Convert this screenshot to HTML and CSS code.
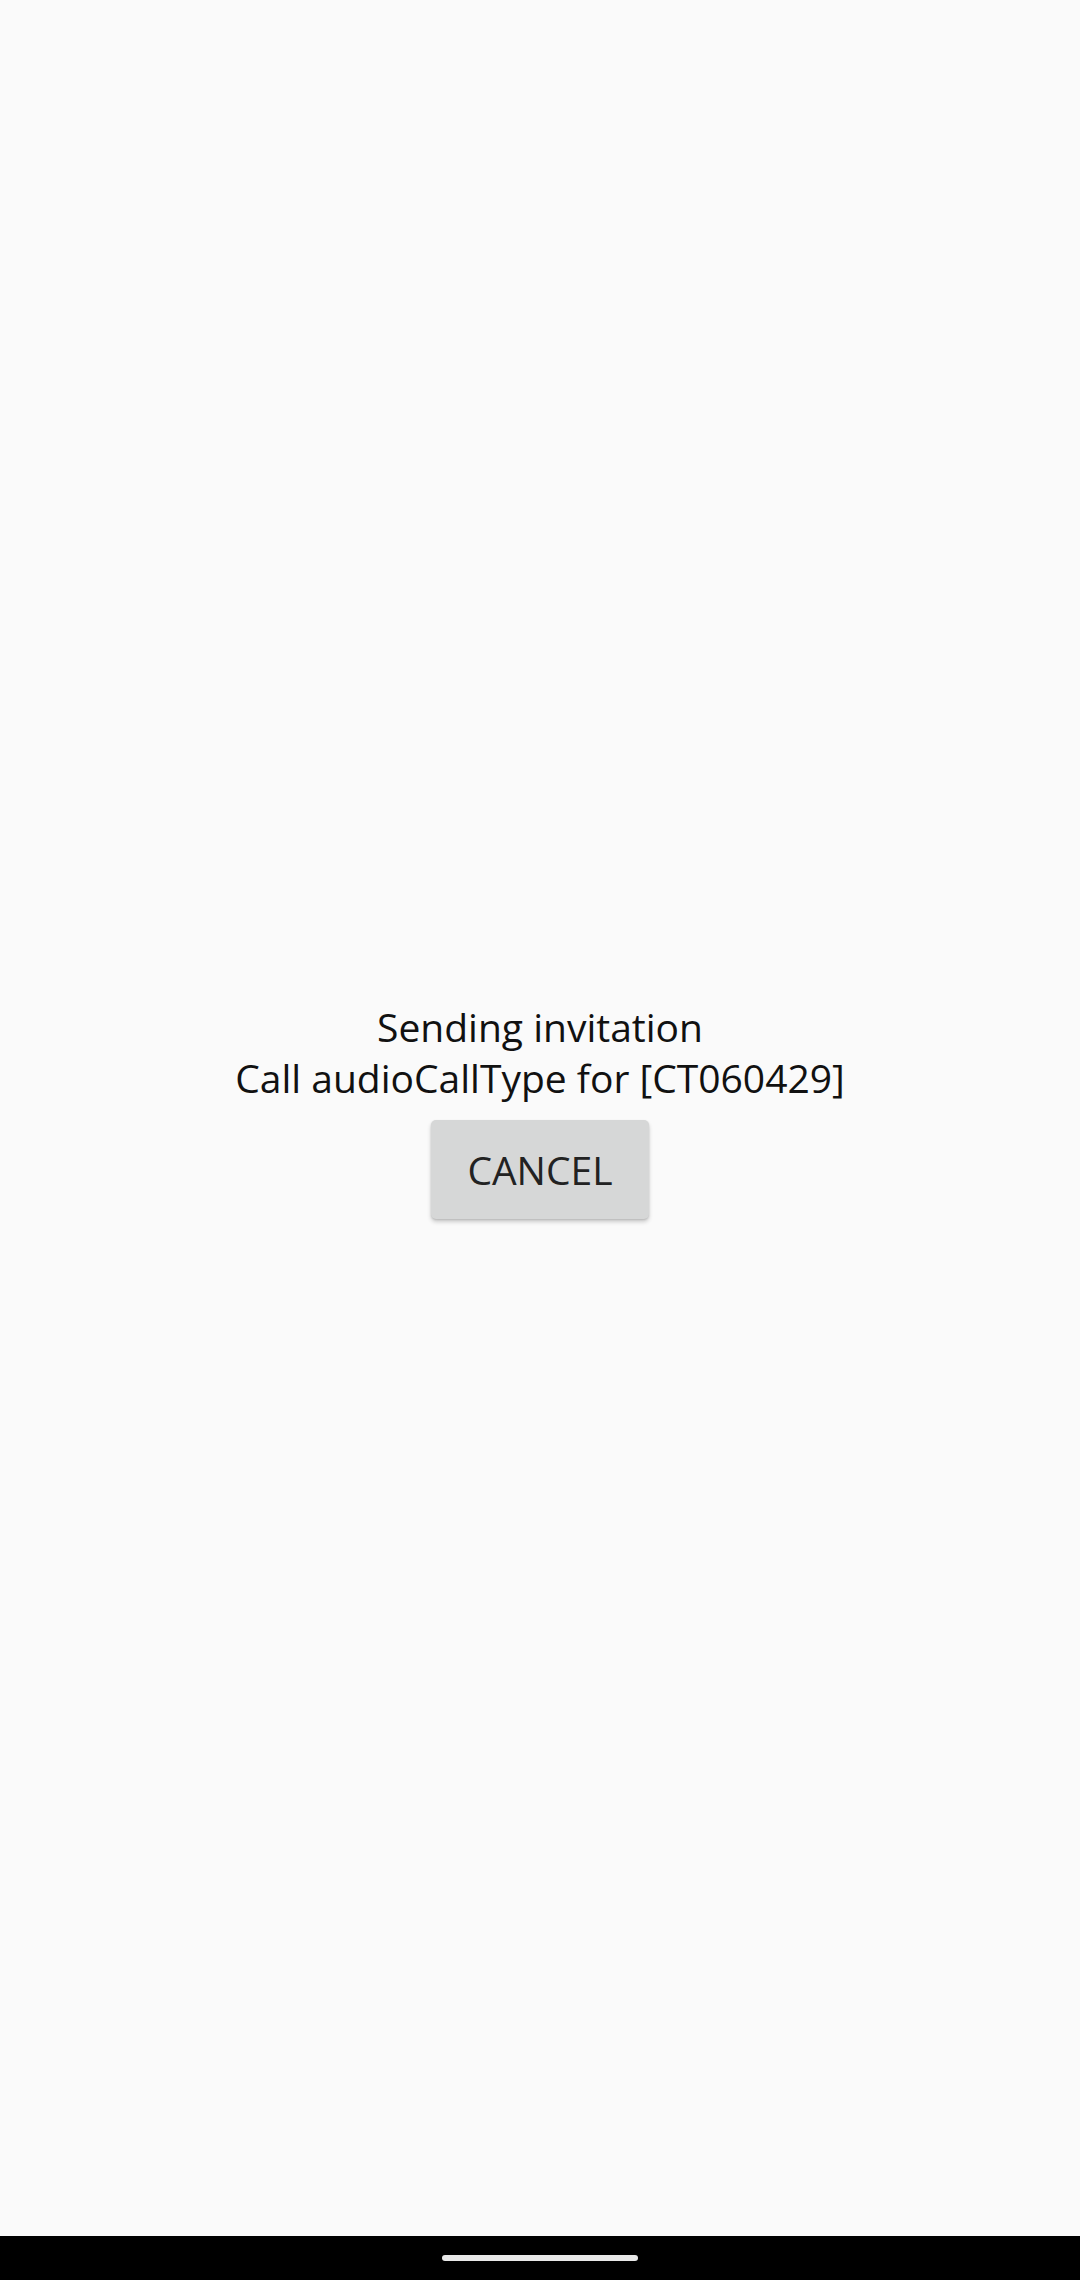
FILE: index.html
```html
<!DOCTYPE html>
<html lang="en">
<head>
<meta charset="utf-8">
<link rel="stylesheet" href="styles.css">
</head>
<body>
<main class="screen">
  <div class="content">
    <p class="message">Sending invitation<br>Call audioCallType for [CT060429]</p>
    <button class="cancel">CANCEL</button>
  </div>
</main>
<nav class="navbar"><span class="handle"></span></nav>
</body>
</html>
```
FILE: styles.css
```css
html, body {
  margin: 0;
  padding: 0;
}
body {
  width: 1080px;
  height: 2280px;
  background: #fafafa;
  font-family: "Open Sans", "Noto Sans", sans-serif;
  display: flex;
  flex-direction: column;
  overflow: hidden;
}
.screen {
  flex: 1;
  display: flex;
  align-items: center;
  justify-content: center;
}
.content {
  display: flex;
  flex-direction: column;
  align-items: center;
}
.message {
  margin: 0;
  font-size: 39px;
  line-height: 51px;
  color: #111;
  text-align: center;
}
.cancel {
  margin-top: 17px;
  margin-bottom: 16px;
  width: 218px;
  height: 99px;
  border: none;
  border-radius: 5px;
  background: #d6d7d7;
  color: #222;
  font-family: "Open Sans", "Noto Sans", sans-serif;
  font-size: 39px;
  padding: 0;
  box-shadow: 0 3px 4px rgba(0,0,0,0.18), 0 1px 2px rgba(0,0,0,0.12);
}
.navbar {
  height: 44px;
  background: #000;
  display: flex;
  align-items: center;
  justify-content: center;
}
.handle {
  width: 196px;
  height: 6px;
  border-radius: 3px;
  background: #e8e8e8;
}
```
